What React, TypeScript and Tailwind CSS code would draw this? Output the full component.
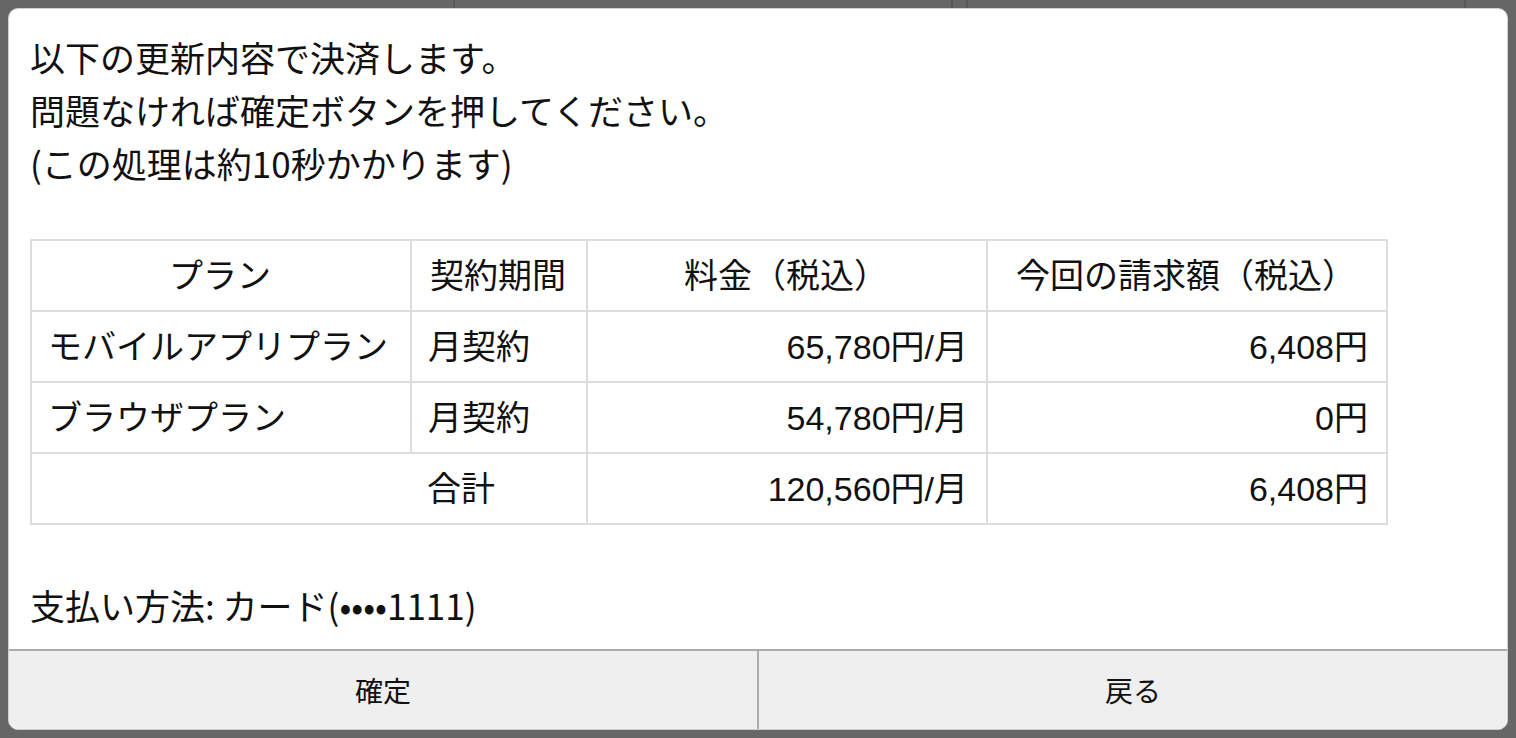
const rows = [
  { plan: 'モバイルアプリプラン', term: '月契約', price: '65,780円/月', bill: '6,408円' },
  { plan: 'ブラウザプラン', term: '月契約', price: '54,780円/月', bill: '0円' },
]

const cell = 'border-2 border-[#dddddd] h-[71px] pl-4 pr-[18px] font-normal whitespace-nowrap'

export default function App() {
  return (
    <div className="relative w-[1516px] h-[738px] bg-[#666666] overflow-hidden">
      {/* page behind the overlay, only its column lines show at the top */}
      <div className="absolute inset-x-0 top-0 h-2 flex">
        <div className="w-[455px] border-r-2 border-[#585858]" />
        <div className="w-[498px] border-r-2 border-[#585858]" />
        <div className="w-[15px] border-r-2 border-[#585858]" />
        <div className="w-[498px] border-r-2 border-[#585858]" />
      </div>

      <div className="relative p-2 h-full">
        <div className="h-full flex flex-col bg-white rounded-[10px] border border-[#cfcfcf] overflow-hidden text-[#111111]">
          <div className="flex-1 px-[21px] pt-[21px] font-['Noto_Sans_CJK_JP',sans-serif] text-[35px] leading-[53px]">
            <p>以下の更新内容で決済します。</p>
            <p>問題なければ確定ボタンを押してください。</p>
            <p>(この処理は約10秒かかります)</p>

            <table className="mt-[50px] table-fixed border-collapse font-['Liberation_Sans','Noto_Sans_CJK_JP',sans-serif] text-[34px] leading-[50px]">
              <colgroup>
                <col className="w-[380px]" />
                <col className="w-[176px]" />
                <col className="w-[400px]" />
                <col className="w-[400px]" />
              </colgroup>
              <thead>
                <tr>
                  <th className={`${cell} text-center`}>プラン</th>
                  <th className={`${cell} text-center`}>契約期間</th>
                  <th className={`${cell} text-center`}>料金（税込）</th>
                  <th className={`${cell} text-center`}>今回の請求額（税込）</th>
                </tr>
              </thead>
              <tbody>
                {rows.map(r => (
                  <tr key={r.plan}>
                    <td className={`${cell} text-left`}>{r.plan}</td>
                    <td className={`${cell} text-left`}>{r.term}</td>
                    <td className={`${cell} text-right`}>{r.price}</td>
                    <td className={`${cell} text-right`}>{r.bill}</td>
                  </tr>
                ))}
                <tr>
                  <td className={`${cell} border-r-0`} />
                  <td className={`${cell} border-l-0 text-left`}>合計</td>
                  <td className={`${cell} text-right`}>120,560円/月</td>
                  <td className={`${cell} text-right`}>6,408円</td>
                </tr>
              </tbody>
            </table>

            <p className="mt-[53px]">支払い方法: カード(••••1111)</p>
          </div>

          <div className="h-[80px] flex border-t-2 border-[#aaaaaa] bg-[#efefef] font-['Noto_Sans_CJK_JP',sans-serif] text-[28px]">
            <button className="flex-1 flex items-center justify-center border-r-2 border-[#aaaaaa]">確定</button>
            <button className="flex-1 flex items-center justify-center">戻る</button>
          </div>
        </div>
      </div>
    </div>
  )
}
